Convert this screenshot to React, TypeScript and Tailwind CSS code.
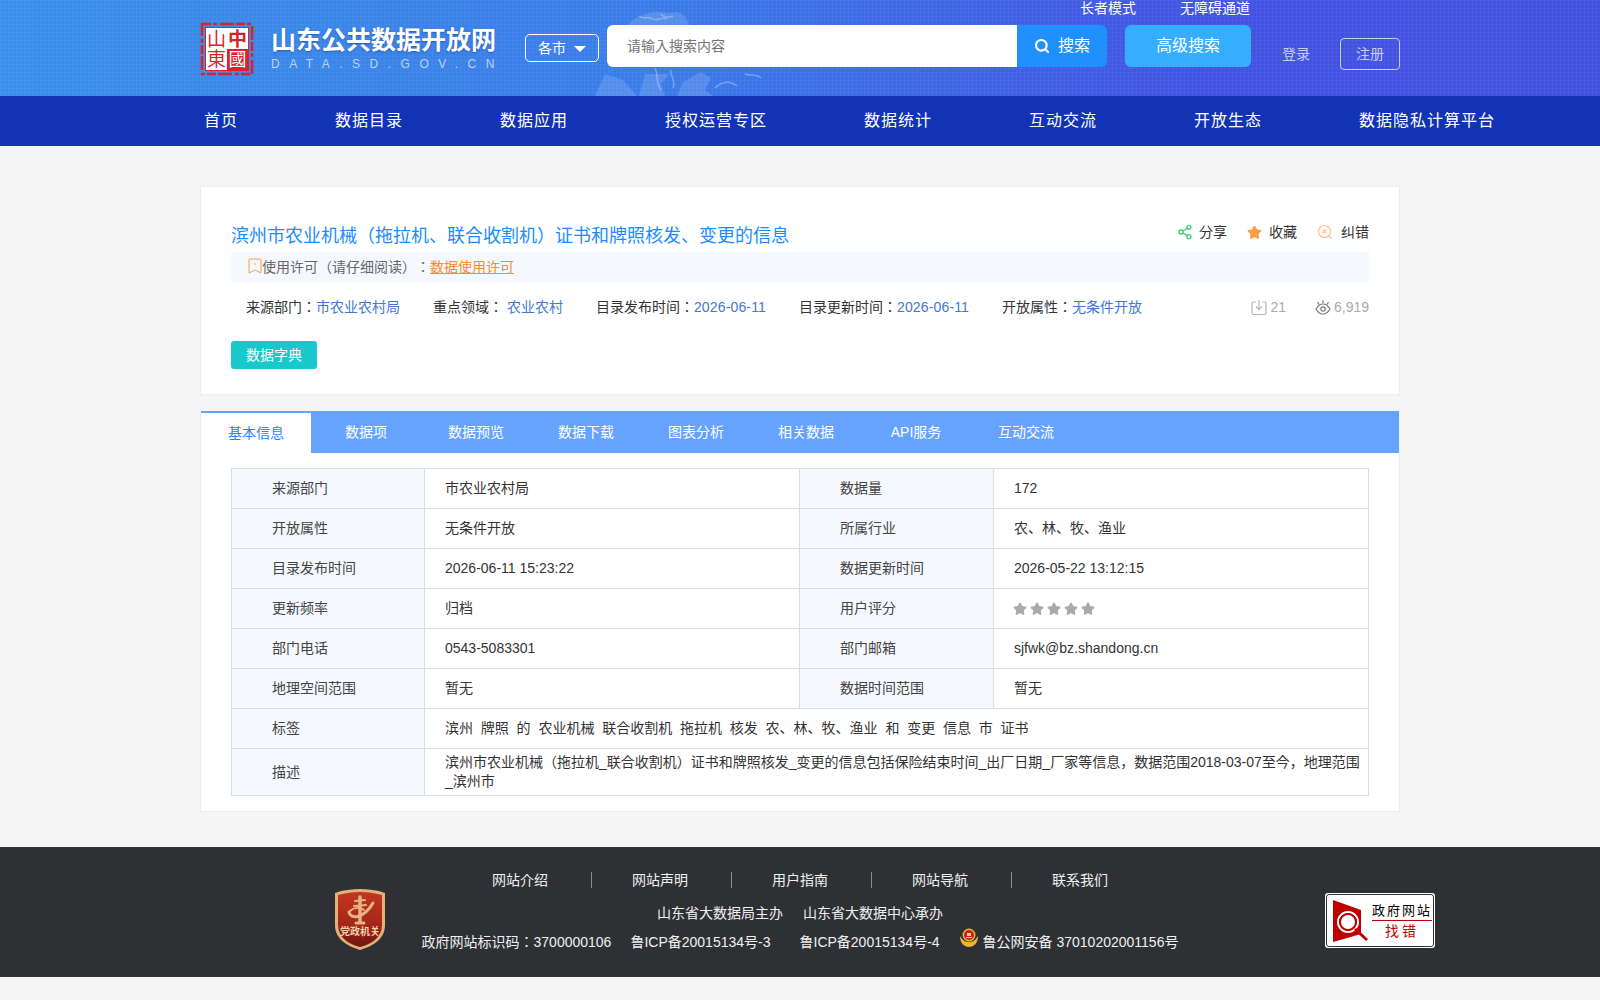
import { Search, Share2, Star } from "lucide-react";

const NAV_ITEMS = [
  "首页",
  "数据目录",
  "数据应用",
  "授权运营专区",
  "数据统计",
  "互动交流",
  "开放生态",
  "数据隐私计算平台",
];

const TABS = [
  "基本信息",
  "数据项",
  "数据预览",
  "数据下载",
  "图表分析",
  "相关数据",
  "API服务",
  "互动交流",
];

const ROWS = [
  ["来源部门", "市农业农村局", "数据量", "172"],
  ["开放属性", "无条件开放", "所属行业", "农、林、牧、渔业"],
  ["目录发布时间", "2026-06-11 15:23:22", "数据更新时间", "2026-05-22 13:12:15"],
  ["更新频率", "归档", "用户评分", ""],
  ["部门电话", "0543-5083301", "部门邮箱", "sjfwk@bz.shandong.cn"],
  ["地理空间范围", "暂无", "数据时间范围", "暂无"],
];

const TAGS = [
  "滨州",
  "牌照",
  "的",
  "农业机械",
  "联合收割机",
  "拖拉机",
  "核发",
  "农、林、牧、渔业",
  "和",
  "变更",
  "信息",
  "市",
  "证书",
];

const META = [
  ["来源部门：", "市农业农村局"],
  ["重点领域： ", "农业农村"],
  ["目录发布时间：", "2026-06-11"],
  ["目录更新时间：", "2026-06-11"],
  ["开放属性：", "无条件开放"],
];

const FOOTER_LINKS = ["网站介绍", "网站声明", "用户指南", "网站导航", "联系我们"];

function SealLogo() {
  return (
    <svg width="54" height="54" viewBox="0 0 54 54" className="shrink-0">
      <rect x="2" y="2" width="50" height="50" fill="none" stroke="#d8232a" strokeWidth="2.500" strokeDasharray="9 2 4 3 14 2" />
      <rect x="5" y="5" width="44" height="44" fill="#d8232a" />
      <rect x="6" y="6" width="21" height="42" fill="#fff" />
      <rect x="27" y="6" width="21" height="21" fill="#fff" />
      <text x="16.500" y="24" fontSize="19" textAnchor="middle" fill="#d8232a">山</text>
      <text x="16.500" y="44" fontSize="19" textAnchor="middle" fill="#d8232a">東</text>
      <text x="37.500" y="24" fontSize="19" fontWeight="700" textAnchor="middle" fill="#d8232a">中</text>
      <text x="37.500" y="44" fontSize="18" textAnchor="middle" fill="#fff">國</text>
    </svg>
  );
}

function MapDecoration() {
  return (
    <svg
      width="190"
      height="96"
      viewBox="0 0 190 96"
      className="absolute left-[395px] top-0"
    >
      <g fill="#a9c6f5" opacity="0.25">
        <path d="M36 22c6-6 14-8 22-10 8-1 14 2 22 0 6 0 10 3 12 8l4 8H30z" />
        <path d="M0 96l10-22 18 6 14 16zM44 96l6-22h24l-8 10 4 12z" />
        <path d="M82 96l6-14 18-10 10 6-6 12 8 6z" />
      </g>
      <g fill="none" stroke="#cfe0fa" strokeWidth="1.500" opacity="0.4">
        <path d="M44 16c4 4 10 0 14 3s8-3 14 0M66 14c2 3 8 4 12 2" />
        <path d="M60 68c4 8 0 14 6 22M76 70c-2 6 6 10 2 18M120 88c6-6 14-8 22-2M150 74c6 2 12 0 16 4" />
      </g>
    </svg>
  );
}

function Header() {
  return (
    <header className="h-[96px] bg-[linear-gradient(rgba(255,255,255,0.035)_1px,transparent_1px),linear-gradient(90deg,rgba(255,255,255,0.035)_1px,transparent_1px),linear-gradient(90deg,#3a90ea_0%,#3b7ce8_40%,#4253e2_75%,#4351e0_100%)] bg-[size:4px_4px,4px_4px,100%_100%]">
      <div className="relative mx-auto flex h-full w-[1200px] items-start">
        <MapDecoration />
        <div className="mt-[22px] flex items-center">
          <SealLogo />
          <div className="-mt-[2px] ml-[17px] w-[228px]">
            <div className="text-[25px] font-bold leading-[30px] whitespace-nowrap text-white [text-shadow:0_1px_2px_rgba(20,50,120,0.5)]">
              山东公共数据开放网
            </div>
            <div className="mt-[2px] text-[12px] leading-[14px] tracking-[9.5px] whitespace-nowrap text-[#b9d3f7]">
              DATA.SD.GOV.CN
            </div>
          </div>
        </div>
        <div className="mt-[34px] ml-[26px] flex h-[28px] w-[74px] items-center justify-center gap-2 rounded-[5px] border border-white text-[14px] text-white">
          <span>各市</span>
          <span className="mt-[2px] h-0 w-0 border-x-[6px] border-t-[6px] border-x-transparent border-t-white" />
        </div>
        <div className="relative z-10 mt-[25px] ml-2 flex h-[42px] w-[500px]">
          <div className="flex flex-1 items-center rounded-l-[6px] bg-white pl-5 text-[14px] text-[#757575]">
            请输入搜索内容
          </div>
          <div className="flex w-[90px] items-center justify-center gap-2 rounded-r-[6px] bg-[#2090ff] text-[16px] text-white">
            <Search size={16} strokeWidth={3.2} />
            <span>搜索</span>
          </div>
        </div>
        <div className="relative z-10 mt-[25px] ml-[18px] flex h-[42px] w-[126px] items-center justify-center rounded-[6px] bg-[#36aeff] text-[16px] text-white">
          高级搜索
        </div>
        <div className="absolute top-0 left-[880px] z-10 flex gap-[44px] text-[14px] leading-[17px] text-white">
          <span>长者模式</span>
          <span>无障碍通道</span>
        </div>
        <div className="mt-[46px] ml-[31px] text-[14px] leading-[17px] text-[#c6cdf2]">登录</div>
        <div className="mt-[38px] ml-[30px] flex h-[32px] w-[60px] items-center justify-center rounded-[4px] border border-[#c6cdf2] text-[14px] text-[#c6cdf2]">
          注册
        </div>
      </div>
    </header>
  );
}

function Nav() {
  return (
    <nav className="h-[50px] bg-[#1233b3]">
      <div className="mx-auto flex h-full w-[1200px] items-center gap-[97px] pl-1 text-[16px] tracking-[1px] whitespace-nowrap text-white">
        {NAV_ITEMS.map((item) => (
          <span key={item}>{item}</span>
        ))}
      </div>
    </nav>
  );
}

function SummaryCard() {
  return (
    <section className="h-[209px] border border-[#eeeeee] bg-white px-[30px] pt-[36px]">
      <div className="flex items-start justify-between">
        <h1 className="text-[18px] leading-[26px] font-normal text-[#1a8cff]">
          滨州市农业机械（拖拉机、联合收割机）证书和牌照核发、变更的信息
        </h1>
        <div className="-mt-[1px] flex items-center text-[14px] leading-[20px] text-[#333333]">
          <Share2 size={16} color="#3fd07f" className="mr-[6px]" />
          <span>分享</span>
          <Star size={15} color="#ff9c4a" fill="#ff9c4a" className="mr-[7px] ml-[20px]" />
          <span>收藏</span>
          <svg width="16" height="16" viewBox="0 0 16 16" fill="none" stroke="#ffc08a" strokeWidth="1.2" className="mr-[8px] ml-[20px]">
            <circle cx="7.5" cy="7.5" r="6" />
            <path d="M5.5 5.5l4 4M9.5 5.5l-4 4M12 12l2.5 2.5" />
          </svg>
          <span>纠错</span>
        </div>
      </div>
      <div className="mt-[3px] flex h-[31px] items-center bg-[#f5f9fe] pl-[17px] text-[14px] text-[#666666]">
        <svg width="14" height="16" viewBox="0 0 14 16" fill="none" stroke="#ff9c4a" strokeWidth="1" className="-mt-[3px]">
          <path d="M1 2a1 1 0 011-1h10a1 1 0 011 1v13l-6-3-6 3z" />
          <path d="M6 6h2" />
        </svg>
        <span>使用许可（请仔细阅读）：</span>
        <span className="text-[#ff8a2b] underline">数据使用许可</span>
      </div>
      <div className="mt-[14px] flex h-[20px] items-center gap-[33px] pl-[15px] text-[14px] leading-[20px] text-[#333333]">
        {META.map(([label, value]) => (
          <span key={label} className="whitespace-pre">
            {label}
            <span className={value.startsWith("2026") ? "tracking-[0.15px] text-[#3f78d0]" : "text-[#3f78d0]"}>
              {value}
            </span>
          </span>
        ))}
        <div className="ml-auto flex items-center text-[#aaaaaa]">
          <svg width="16" height="18" viewBox="0 0 16 18" fill="none" stroke="#b5b5b5" strokeWidth="1.2" className="mr-[3px]">
            <path d="M4.5 4H2.5a1.5 1.5 0 00-1.500 1.500v9.500a1.500 1.500 0 001.500 1.500h11a1.500 1.500 0 001.500-1.500V5.500A1.500 1.500 0 0013.500 4H11.500" />
            <path d="M8 2v9M5 8.500l3 3 3-3" />
          </svg>
          <span>21</span>
          <svg width="18" height="17" viewBox="0 0 18 17" fill="none" stroke="#777777" strokeWidth="1.2" className="mr-[2px] ml-[28px]">
            <path d="M2 10c2-3.500 4.500-5 7-5s5 1.500 7 5c-2 3.500-4.500 5-7 5s-5-1.500-7-5z" />
            <circle cx="9" cy="10" r="2.200" />
            <path d="M9 1.500V4M3.500 3l1.500 2.500M14.500 3L13 5.500" />
          </svg>
          <span>6,919</span>
        </div>
      </div>
      <div className="mt-[24px] flex h-[28px] w-[86px] items-center justify-center rounded-[3px] bg-[#19c8cc] text-[14px] text-white">
        数据字典
      </div>
    </section>
  );
}

function Rating() {
  return (
    <div className="-ml-[1px] flex gap-[3px]">
      {[0, 1, 2, 3, 4].map((i) => (
        <Star key={i} size={14} color="#aaaaaa" fill="#aaaaaa" />
      ))}
    </div>
  );
}

function DetailTable() {
  const labelCell = "border border-[#dddddd] bg-[#f5f9fe] pl-[40px] text-[#444444]";
  const valueCell = "border border-[#dddddd] pl-[20px] text-[#333333]";
  return (
    <table className="w-[1137px] table-fixed border-collapse text-[14px] leading-[19px]">
      <colgroup>
        <col className="w-[193px]" />
        <col className="w-[375px]" />
        <col className="w-[194px]" />
        <col className="w-[375px]" />
      </colgroup>
      <tbody>
        {ROWS.map(([l1, v1, l2, v2]) => (
          <tr key={l1} className="h-[40px]">
            <td className={labelCell}>{l1}</td>
            <td className={valueCell}>{v1}</td>
            <td className={labelCell}>{l2}</td>
            <td className={valueCell}>{l2 === "用户评分" ? <Rating /> : v2}</td>
          </tr>
        ))}
        <tr className="h-[40px]">
          <td className={labelCell}>标签</td>
          <td className={valueCell} colSpan={3}>
            <div className="flex gap-[7.8px]">
              {TAGS.map((tag) => (
                <span key={tag}>{tag}</span>
              ))}
            </div>
          </td>
        </tr>
        <tr className="h-[47px]">
          <td className={labelCell}>描述</td>
          <td className={`${valueCell} pr-2`} colSpan={3}>
            滨州市农业机械（拖拉机_联合收割机）证书和牌照核发_变更的信息包括保险结束时间_出厂日期_厂家等信息，数据范围2018-03-07至今，地理范围_滨州市
          </td>
        </tr>
      </tbody>
    </table>
  );
}

function DetailPanel() {
  return (
    <section className="mt-[16px] h-[401px] border-x border-b border-[#eeeeee] bg-white">
      <div className="flex h-[42px] bg-[#66a3ff] text-[14px] text-white">
        {TABS.map((tab, i) => (
          <div
            key={tab + i}
            className={
              i === 0
                ? "mt-[2px] flex w-[110px] items-center justify-center bg-white text-[#1a8cff]"
                : "flex w-[110px] items-center justify-center"
            }
          >
            {tab}
          </div>
        ))}
      </div>
      <div className="px-[30px] pt-[15px]">
        <DetailTable />
      </div>
    </section>
  );
}

function PartyBadge() {
  return (
    <svg width="52" height="63" viewBox="0 0 52 63" className="shrink-0">
      <defs>
        <linearGradient id="partyRed" x1="0" y1="0" x2="0" y2="1">
          <stop offset="0" stopColor="#c4361c" />
          <stop offset="0.6" stopColor="#a3261a" />
          <stop offset="1" stopColor="#6e1410" />
        </linearGradient>
      </defs>
      <path d="M26 1c8 0 17 1 25 4v32c0 14-12 21-25 25C13 58 1 51 1 37V5c8-3 17-4 25-4z" fill="#e2b27a" />
      <path d="M26 4c7 0 15 1 22 3v30c0 12-10 19-22 22C14 56 4 49 4 37V7c7-2 15-3 22-3z" fill="url(#partyRed)" />
      <g fill="none" stroke="#e6b483" strokeLinecap="round">
        <path d="M26 9v25" strokeWidth="3.500" />
        <path d="M22 35h8" strokeWidth="3" />
        <path d="M21 13l10-1M20 18l12-1" strokeWidth="2" />
        <path d="M15 24c1 7 14 8 24-9" strokeWidth="3" />
        <path d="M16 23c4-4 10-4 14-1" strokeWidth="2" />
      </g>
      <text x="26" y="47" fontSize="10" fontWeight="700" textAnchor="middle" fill="#f3d3a6">党政机关</text>
    </svg>
  );
}

function PoliceBadge() {
  return (
    <svg width="18" height="21" viewBox="0 0 18 21" className="mr-[5px] -mt-[9px]">
      <path d="M0 9c0 7 4 11 9 11s9-4 9-11c-2 3-4 6-9 6s-7-3-9-6z" fill="#e6b53a" />
      <circle cx="9" cy="8" r="6.500" fill="#e6b53a" />
      <circle cx="9" cy="8" r="5" fill="#c9201f" />
      <path d="M6 10h6v1H6zM7 6h4v3H7z" fill="#f2cf5a" />
    </svg>
  );
}

function ErrorBadge() {
  return (
    <div className="mt-[46px] ml-[111px] h-[55px] w-[110px] rounded-[3px] bg-white p-[1px]">
      <div className="flex h-full items-center rounded-[3px] border border-[#333333] pr-[3px] pl-[5px]">
        <svg width="40" height="44" viewBox="0 0 40 44" className="shrink-0">
          <path d="M1 1l28 10v24L1 43z" fill="#c00000" />
          <circle cx="16" cy="23" r="10" fill="none" stroke="#fff" strokeWidth="2" />
          <circle cx="16" cy="23" r="8" fill="#fff" stroke="#c00000" strokeWidth="2" />
          <path d="M23 30l12 11" stroke="#c00000" strokeWidth="3" />
        </svg>
        <div className="flex-1 text-center">
          <div className="border-b border-[#c00000] pb-[1px] text-[13px] leading-[16px] tracking-[2px] whitespace-nowrap text-black">
            政府网站
          </div>
          <div className="pt-[2px] text-[14px] leading-[16px] tracking-[3px] text-[#c00000]">找错</div>
        </div>
      </div>
    </div>
  );
}

function Footer() {
  return (
    <footer className="mt-[35px] flex h-[130px] bg-[#2e3034] pl-[334px] text-[14px] text-[#f0f0f0]">
      <div className="mt-[41px]">
        <PartyBadge />
      </div>
      <div className="w-[828px] shrink-0 pt-[24px] text-center">
        <div className="flex h-[18px] items-center justify-center pr-[40px] leading-[18px]">
          {FOOTER_LINKS.map((link, i) => (
            <span
              key={link}
              className={
                i < FOOTER_LINKS.length - 1
                  ? "h-[16px] border-r border-[#8a8c90] pr-[43px] pl-[40px] leading-[16px]"
                  : "h-[16px] pl-[40px] leading-[16px]"
              }
            >
              {link}
            </span>
          ))}
        </div>
        <div className="mt-[15px] flex justify-center gap-5 leading-[18px]">
          <span>山东省大数据局主办</span>
          <span>山东省大数据中心承办</span>
        </div>
        <div className="mt-[11px] flex items-center justify-center leading-[18px] whitespace-nowrap">
          <span>政府网站标识码：3700000106</span>
          <span className="ml-[19px]">鲁ICP备20015134号-3</span>
          <span className="mr-[20px] ml-[29px]">鲁ICP备20015134号-4</span>
          <PoliceBadge />
          <span>鲁公网安备 37010202001156号</span>
        </div>
      </div>
      <ErrorBadge />
    </footer>
  );
}

export default function App() {
  return (
    <div className="min-h-[1000px] bg-[#f5f5f5] font-['Liberation_Sans','Noto_Sans_CJK_JP',sans-serif] [text-spacing-trim:space-all]">
      <Header />
      <Nav />
      <main className="mx-auto w-[1200px] pt-[40px]">
        <SummaryCard />
        <DetailPanel />
      </main>
      <Footer />
    </div>
  );
}
